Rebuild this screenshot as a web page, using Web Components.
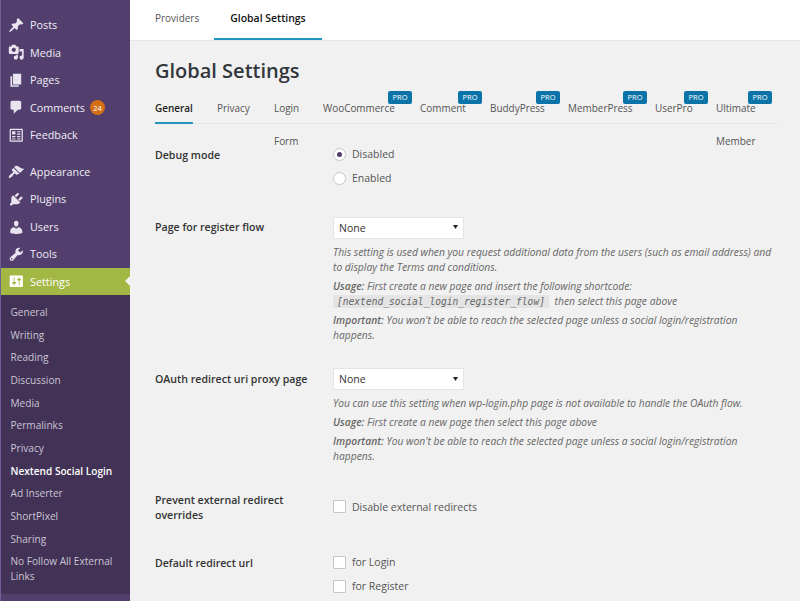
<!DOCTYPE html>
<html>
<head>
<meta charset="utf-8">
<title>Global Settings</title>
<style>
  html, body { margin: 0; height: 601px; overflow: hidden; background: #f1f1f1; }
  body { font-family: "Open Sans", "Noto Sans", sans-serif; display: flex; }
</style>
</head>
<body>
<wp-sidebar>
  <menu-item icon="post" label="Posts"></menu-item>
  <menu-item icon="media" label="Media"></menu-item>
  <menu-item icon="page" label="Pages"></menu-item>
  <menu-item icon="comment" label="Comments" count="24"></menu-item>
  <menu-item icon="feedback" label="Feedback"></menu-item>
  <menu-item icon="appearance" label="Appearance" class="first"></menu-item>
  <menu-item icon="plugin" label="Plugins"></menu-item>
  <menu-item icon="users" label="Users"></menu-item>
  <menu-item icon="tools" label="Tools"></menu-item>
  <menu-item icon="settings" label="Settings" current></menu-item>
  <wp-submenu>
    <a>General</a><a>Writing</a><a>Reading</a><a>Discussion</a><a>Media</a><a>Permalinks</a><a>Privacy</a>
    <a class="on">Nextend Social Login</a>
    <a>Ad Inserter</a><a>ShortPixel</a><a>Sharing</a><a>No Follow All External Links</a>
  </wp-submenu>
</wp-sidebar>
<main-area>
  <top-tabs></top-tabs>
  <h1-title>Global Settings</h1-title>
  <settings-tabs></settings-tabs>
  <settings-row label="Debug mode" style="--top:23px;--h:72px">
    <check-option type="radio" checked>Disabled</check-option>
    <check-option type="radio">Enabled</check-option>
  </settings-row>
  <settings-row label="Page for register flow" style="--top:0px;--h:151.5px">
    <fake-select></fake-select>
    <help-text>
      <p>This setting is used when you request additional data from the users (such as email address) and to display the Terms and conditions.</p>
      <p><b>Usage:</b> First create a new page and insert the following shortcode:<br><code>[nextend_social_login_register_flow]</code> then select this page above</p>
      <p><b>Important:</b> You won't be able to reach the selected page unless a social login/registration happens.</p>
    </help-text>
  </settings-row>
  <settings-row label="OAuth redirect uri proxy page" style="--top:0px;--h:121px">
    <fake-select></fake-select>
    <help-text>
      <p>You can use this setting when wp-login.php page is not available to handle the OAuth flow.</p>
      <p><b>Usage:</b> First create a new page then select this page above</p>
      <p><b>Important:</b> You won't be able to reach the selected page unless a social login/registration happens.</p>
    </help-text>
  </settings-row>
  <settings-row label="Prevent external redirect overrides" style="--top:0px;--h:63.5px">
    <check-option type="checkbox" style="margin-top:8px">Disable external redirects</check-option>
  </settings-row>
  <settings-row label="Default redirect url" style="--top:0px;--h:60px">
    <check-option type="checkbox">for Login</check-option>
    <check-option type="checkbox">for Register</check-option>
  </settings-row>
</main-area>

<script>
const ICONS = {
  post: '<path d="M10.44 3.02l1.82-1.82 6.36 6.35-1.83 1.82c-1.05-.68-2.48-.57-3.41.36l-.75.75c-.92.93-1.04 2.35-.35 3.41l-1.83 1.82-2.41-2.41-2.8 2.79c-.42.42-3.38 2.71-3.8 2.29s1.86-3.39 2.28-3.81l2.79-2.79L4.1 9.36l1.83-1.82c1.05.69 2.48.57 3.4-.36l.75-.75c.93-.92 1.05-2.35.36-3.41z"/>',
  media: '<path d="M13 11V4c0-.55-.45-1-1-1h-1.67L9 1H5L3.67 3H2c-.55 0-1 .45-1 1v7c0 .55.45 1 1 1h10c.55 0 1-.45 1-1zM7 4.5c1.38 0 2.5 1.12 2.5 2.5S8.38 9.5 7 9.5 4.5 8.38 4.5 7 5.62 4.5 7 4.5zM14 6h5v10.5c0 1.38-1.12 2.5-2.5 2.5S14 17.88 14 16.5s1.12-2.5 2.5-2.5c.17 0 .34.02.5.05V9h-3V6zm-4 8.05V13h2v3.5c0 1.38-1.12 2.5-2.5 2.5S7 17.88 7 16.5 8.12 14 9.5 14c.17 0 .34.02.5.05z"/>',
  page: '<path d="M6 15V2h10v13H6zm-1 1h8v2H3V5h2v11z"/>',
  comment: '<path d="M5 2h9c1.1 0 2 .9 2 2v7c0 1.1-.9 2-2 2h-2l-5 5v-5H5c-1.1 0-2-.9-2-2V4c0-1.1.9-2 2-2z"/>',
  feedback: '<path fill-rule="evenodd" d="M3 2h14c.55 0 1 .45 1 1v14c0 .55-.45 1-1 1H3c-.55 0-1-.45-1-1V3c0-.55.45-1 1-1zm.5 1.5v13h13v-13h-13zM5 5h4v4H5V5zm6 0h4v1.5h-4V5zm0 3h4v1.5h-4V8zm-6 3h4v1.5H5V11zm6 0h4v1.5h-4V11zm-6 3h4v1h-4v-1zm6 0h4v1h-4v-1z"/>',
  appearance: '<path d="M14.48 11.06L7.41 3.99l1.5-1.5c.5-.56 2.3-.47 3.51.32 1.21.8 1.43 1.28 2.91 2.1 1.18.64 2.45 1.26 4.45.85zm-.71.71L6.7 4.7 4.93 6.47c-.39.39-.39 1.02 0 1.41l1.06 1.06c.39.39.39 1.03 0 1.42-.6.6-1.43 1.11-2.21 1.69-.35.26-.7.53-1.01.84-1.34 1.34-2.37 3.09-1.67 3.79.7.7 2.45-.33 3.79-1.67.31-.31.58-.66.84-1.01.58-.78 1.09-1.61 1.69-2.21.39-.39 1.03-.39 1.42 0l1.06 1.06c.39.39 1.02.39 1.41 0z"/>',
  plugin: '<path d="M13.11 4.36L9.87 7.6 8 5.73l3.24-3.24c.35-.34 1.05-.2 1.56.32.52.51.66 1.21.31 1.55zm-8 1.77l.91-1.12 9.01 9.01-1.19.84c-.71.71-2.63 1.16-3.82 1.16H6.14L4.9 17.26c-.59.59-1.54.59-2.12 0-.59-.58-.59-1.53 0-2.12l1.24-1.24v-3.88c0-1.13.4-3.19 1.09-3.89zm7.26 3.97l3.24-3.24c.34-.35 1.04-.21 1.55.31.52.51.66 1.21.31 1.55l-3.24 3.25z"/>',
  users: '<path d="M10 9.25c-2.27 0-2.73-3.44-2.73-3.44C7 4.02 7.82 2 9.97 2c2.16 0 2.98 2.02 2.71 3.81 0 0-.41 3.44-2.68 3.44zm0 2.57L12.72 10c2.39 0 4.52 2.33 4.52 4.53v2.49s-3.65 1.13-7.24 1.13c-3.65 0-7.24-1.13-7.24-1.13v-2.49c0-2.25 1.94-4.48 4.47-4.48z"/>',
  tools: '<path d="M16.68 9.77c-1.34 1.34-3.3 1.67-4.95.99l-5.41 6.52c-.99.99-2.59.99-3.58 0s-.99-2.59 0-3.57l6.52-5.42c-.68-1.65-.35-3.61.99-4.95 1.28-1.28 3.12-1.62 4.72-1.06l-2.89 2.89 2.82 2.82 2.86-2.87c.53 1.58.18 3.39-1.08 4.65zM3.81 16.21c.4.39 1.04.39 1.43 0 .4-.4.4-1.04 0-1.43-.39-.4-1.03-.4-1.43 0-.39.39-.39 1.03 0 1.43z"/>',
  settings: '<path d="M18 16V4c0-.55-.45-1-1-1H3c-.55 0-1 .45-1 1v12c0 .55.45 1 1 1h14c.55 0 1-.45 1-1zM8 11h1c.55 0 1 .45 1 1s-.45 1-1 1H8v1.5c0 .28-.22.5-.5.5s-.5-.22-.5-.5V13H6c-.55 0-1-.45-1-1s.45-1 1-1h1V5.5c0-.28.22-.5.5-.5s.5.22.5.5V11zm5-2h-1c-.55 0-1-.45-1-1s.45-1 1-1h1V5.5c0-.28.22-.5.5-.5s.5.22.5.5V7h1c.55 0 1 .45 1 1s-.45 1-1 1h-1v5.5c0 .28-.22.5-.5.5s-.5-.22-.5-.5V9z"/>'
};

class WpSidebar extends HTMLElement {
  connectedCallback() {
    this.attachShadow({ mode: 'open' });
    this.shadowRoot.innerHTML = `
      <style>
        :host { display: block; box-sizing: border-box; width: 130px; flex: none; height: 601px; background: #523f6d; border-left: 1px solid #6f5f96; padding-top: 11.5px; }
      </style>
      <slot></slot>`;
  }
}
customElements.define('wp-sidebar', WpSidebar);

class MenuItem extends HTMLElement {
  connectedCallback() {
    this.attachShadow({ mode: 'open' });
    const count = this.getAttribute('count');
    this.shadowRoot.innerHTML = `
      <style>
        :host { display: flex; align-items: center; height: 27.45px; position: relative; color: #f0edf5; font-size: 10.8px; }
        :host(.first) { margin-top: 9.5px; }
        :host([current]) { background: #a3b745; color: #fff; }
        :host([current])::after { content: ''; position: absolute; right: 0; top: 8.5px; border: 5.5px solid transparent; border-right-color: #f1f1f1; border-left-width: 0; }
        svg { width: 16.5px; height: 16.5px; margin-left: 7px; fill: #e9e4f0; flex: none; }
        :host([current]) svg { fill: #fff; }
        span { margin: 0 0 1px 5.5px; white-space: nowrap; }
        i { font-style: normal; margin-left: 5px; width: 15px; height: 15px; border-radius: 50%; background: #d46f15; color: #fff; font-size: 7.5px; display: flex; align-items: center; justify-content: center; }
      </style>
      <svg viewBox="0 0 20 20">${ICONS[this.getAttribute('icon')]}</svg>
      <span>${this.getAttribute('label')}</span>
      ${count ? `<i>${count}</i>` : ''}`;
  }
}
customElements.define('menu-item', MenuItem);

class WpSubmenu extends HTMLElement {
  connectedCallback() {
    this.attachShadow({ mode: 'open' });
    this.shadowRoot.innerHTML = `
      <style>
        :host { display: block; background: #413256; padding: 5.7px 0 6px 9.5px; color: #cbc5d3; font-size: 10.1px; line-height: 15px; }
        ::slotted(a) { display: block; padding: 3.85px 6px 3.85px 0; }
        ::slotted(a.on) { color: #fff; font-weight: 600; }
      </style>
      <slot></slot>`;
  }
}
customElements.define('wp-submenu', WpSubmenu);

class MainArea extends HTMLElement {
  connectedCallback() {
    this.attachShadow({ mode: 'open' });
    this.shadowRoot.innerHTML = `
      <style>
        :host { display: block; flex: 1; min-width: 0; height: 601px; color: #444; font-size: 10.5px; }
      </style>
      <slot></slot>`;
  }
}
customElements.define('main-area', MainArea);

class TopTabs extends HTMLElement {
  connectedCallback() {
    this.attachShadow({ mode: 'open' });
    this.shadowRoot.innerHTML = `
      <style>
        :host { display: flex; height: 41px; box-sizing: border-box; background: #fff; padding-left: 25px; gap: 15px; border-bottom: 1px solid #e6e6e6; font-size: 10px; }
        a { height: 40px; box-sizing: border-box; padding-top: 11px; line-height: 15px; color: #555; }
        a.on { color: #111; font-size: 10.45px; font-weight: 600; padding: 11px 16px 0; border-bottom: 2.5px solid #2196bf; }
      </style>
      <a>Providers</a><a class="on">Global Settings</a>`;
  }
}
customElements.define('top-tabs', TopTabs);

class H1Title extends HTMLElement {
  connectedCallback() {
    this.attachShadow({ mode: 'open' });
    this.shadowRoot.innerHTML = `
      <style>
        :host { display: block; padding: 16px 0 0 25px; height: 44px; font-size: 20px; line-height: 28px; font-weight: 600; color: #32373c; }
      </style>
      <slot></slot>`;
  }
}
customElements.define('h1-title', H1Title);

class SettingsTabs extends HTMLElement {
  connectedCallback() {
    this.attachShadow({ mode: 'open' });
    const tabs = [['General', 0, 38], ['Privacy', 0, 33], ['Login Form', 0, 25], ['WooCommerce', 1, 73], ['Comment', 1, 46], ['BuddyPress', 1, 54], ['MemberPress', 1, 63], ['UserPro', 1, 37], ['Ultimate Member', 1, 40]];
    this.shadowRoot.innerHTML = `
      <style>
        :host { display: flex; box-sizing: border-box; height: 23px; margin: 0 22px 0 25px; gap: 24px; border-bottom: 1px solid #e6e6e6; font-size: 9.95px; }
        div { position: relative; box-sizing: border-box; line-height: 33px; color: #555; margin-top: -9px; height: 32px; flex: none; }
        div.on { color: #222; font-weight: 600; border-bottom: 2.5px solid #2196bf; }
        b { position: absolute; right: -16px; top: -1px; width: 24px; height: 13px; border-radius: 2px; background: #0a74a8; color: #fff; font-size: 7.5px; line-height: 13px; font-weight: 400; text-align: center; }
      </style>
      ${tabs.map(([t, pro, w], i) => `<div class="${i ? '' : 'on'}" style="width:${w}px">${t}${pro ? '<b>PRO</b>' : ''}</div>`).join('')}`;
  }
}
customElements.define('settings-tabs', SettingsTabs);

class SettingsRow extends HTMLElement {
  connectedCallback() {
    this.attachShadow({ mode: 'open' });
    this.shadowRoot.innerHTML = `
      <style>
        :host { display: grid; grid-template-columns: 178px 445px; padding-left: 25px; padding-top: var(--top); height: var(--h); }
        .label { font-weight: 600; color: #333; line-height: 15.5px; padding: 1px 14px 0 0; font-size: 10.6px; }
        .control { margin-top: -5px; }
      </style>
      <div class="label">${this.getAttribute('label')}</div>
      <div class="control"><slot></slot></div>`;
  }
}
customElements.define('settings-row', SettingsRow);

class CheckOption extends HTMLElement {
  connectedCallback() {
    this.attachShadow({ mode: 'open' });
    const radio = this.getAttribute('type') === 'radio';
    this.shadowRoot.innerHTML = `
      <style>
        :host { display: flex; align-items: center; height: 24px; color: #555; font-size: 10.5px; }
        span { width: 11px; height: 11px; border: 1px solid #c4c7ca; background: #fff; border-radius: ${radio ? '50%' : '1px'}; margin-right: 6px; display: flex; align-items: center; justify-content: center; flex: none; }
        i { width: 5px; height: 5px; border-radius: 50%; background: #523f6d; }
      </style>
      <span>${this.hasAttribute('checked') ? '<i></i>' : ''}</span><slot></slot>`;
  }
}
customElements.define('check-option', CheckOption);

class FakeSelect extends HTMLElement {
  connectedCallback() {
    this.attachShadow({ mode: 'open' });
    this.shadowRoot.innerHTML = `
      <style>
        :host { display: flex; align-items: center; justify-content: space-between; box-sizing: border-box; width: 131px; height: 22px; margin-top: 2.5px; padding: 0 5px 0 5px; background: #fff; border: 1px solid #e4e4e4; color: #333; font-size: 10.5px; }
        svg { width: 5px; height: 4px; fill: #222; margin-bottom: 1px; }
      </style>
      None<svg viewBox="0 0 5 4"><path d="M0 0h5L2.5 4z"/></svg>`;
  }
}
customElements.define('fake-select', FakeSelect);

class HelpText extends HTMLElement {
  connectedCallback() {
    this.attachShadow({ mode: 'open' });
    this.shadowRoot.innerHTML = `
      <style>
        :host { display: block; margin-top: 6px; font-style: italic; color: #666; font-size: 10.3px; line-height: 15.3px; }
        ::slotted(p) { margin: 0 0 3.7px; }
      </style>
      <slot></slot>`;
  }
}
customElements.define('help-text', HelpText);
</script>
<style>
  help-text code { font-family: "DejaVu Sans Mono", monospace; background: #e4e4e4; padding: 1px 4px; margin-right: 3px; font-size: 9.6px; }
  help-text b { font-weight: 600; }
</style>
</body>
</html>
